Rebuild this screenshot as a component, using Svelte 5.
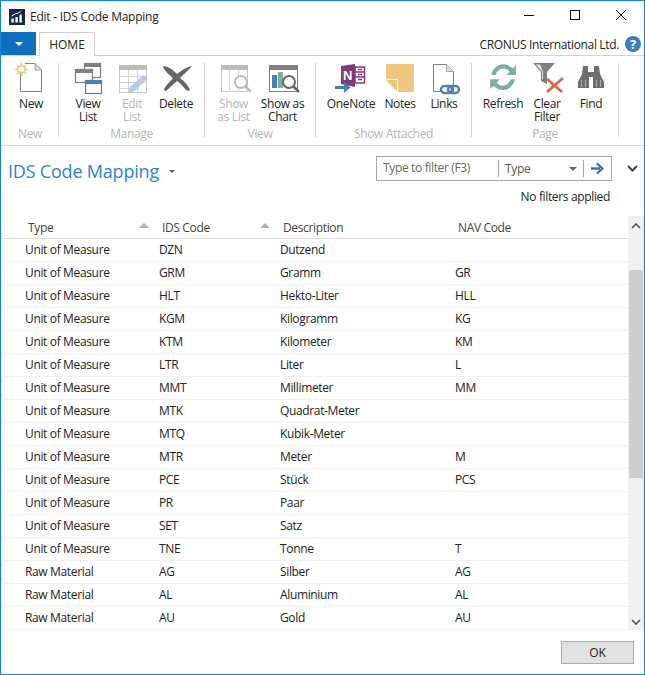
<script>
	const rows = [
		['Unit of Measure', 'DZN', 'Dutzend', ''],
		['Unit of Measure', 'GRM', 'Gramm', 'GR'],
		['Unit of Measure', 'HLT', 'Hekto-Liter', 'HLL'],
		['Unit of Measure', 'KGM', 'Kilogramm', 'KG'],
		['Unit of Measure', 'KTM', 'Kilometer', 'KM'],
		['Unit of Measure', 'LTR', 'Liter', 'L'],
		['Unit of Measure', 'MMT', 'Millimeter', 'MM'],
		['Unit of Measure', 'MTK', 'Quadrat-Meter', ''],
		['Unit of Measure', 'MTQ', 'Kubik-Meter', ''],
		['Unit of Measure', 'MTR', 'Meter', 'M'],
		['Unit of Measure', 'PCE', 'Stück', 'PCS'],
		['Unit of Measure', 'PR', 'Paar', ''],
		['Unit of Measure', 'SET', 'Satz', ''],
		['Unit of Measure', 'TNE', 'Tonne', 'T'],
		['Raw Material', 'AG', 'Silber', 'AG'],
		['Raw Material', 'AL', 'Aluminium', 'AL'],
		['Raw Material', 'AU', 'Gold', 'AU']
	];
</script>

{#snippet windowBox(x, y, w, h, head)}
	<rect x={x + 0.5} y={y + 0.5} width={w - 1} height={h - 1} fill="#fff" stroke={head} stroke-width="1.2" />
	<rect {x} {y} width={w} height="4" fill={head} />
{/snippet}

<div class="window">
	<header class="titlebar">
		<svg class="app-icon" width="20" height="20" viewBox="0 0 20 20">
			<rect width="20" height="20" fill="#12284c" />
			<path d="M3 17v-5h3v5zM8 17v-7h3v7zM13 17V7h3v10z" fill="#fff" />
			<path d="M3 9l5-3 4-1 3-3" fill="none" stroke="#fff" stroke-width="1.2" />
		</svg>
		<span class="title">Edit - IDS Code Mapping</span>
		<div class="window-controls">
			<svg width="14" height="14" viewBox="0 0 14 14"><path d="M2 7.5h10" stroke="#111" fill="none" /></svg>
			<svg width="14" height="14" viewBox="0 0 14 14"><rect x="2.5" y="2.5" width="9" height="9" stroke="#111" fill="none" /></svg>
			<svg width="14" height="14" viewBox="0 0 14 14"><path d="M2 2l10 10M12 2L2 12" stroke="#111" fill="none" /></svg>
		</div>
	</header>

	<div class="tabrow">
		<button class="app-menu" aria-label="Menu"><span class="menu-caret"></span></button>
		<div class="tab">HOME</div>
		<div class="company">CRONUS International Ltd.</div>
		<div class="help">?</div>
	</div>

	<div class="ribbon">
		<section class="group g1">
			<div class="buttons">
				<div class="rb w44">
					<svg width="32" height="32" viewBox="0 0 32 32">
						<path d="M5.500 10v18.500h21V7L20 .5h-10" fill="#fff" stroke="#7f7f7f" />
						<path d="M20 .5V7h6.500z" fill="#ddd" stroke="#aaa" />
						<path d="M6.500 0v13M0 6.500h13M2 2l9 9M11 2l-9 9" stroke="#f0c47a" stroke-width="1.500" />
						<circle cx="6.500" cy="6.500" r="3.500" fill="#fff" stroke="#f0c47a" stroke-width="1.500" />
					</svg>
					<span>New</span>
				</div>
			</div>
			<div class="group-name">New</div>
		</section>

		<section class="group g2">
			<div class="buttons">
				<div class="rb w44">
					<svg width="32" height="32" viewBox="0 0 32 32">
						{@render windowBox(12, 0, 17, 15, '#7f7f7f')}
						{@render windowBox(3, 6, 18, 14, '#7f7f7f')}
						{@render windowBox(13, 17, 17, 14, '#4a7fb5')}
					</svg>
					<span>View<br />List</span>
				</div>
				<div class="rb w44 off">
					<svg width="32" height="32" viewBox="0 0 32 32">
						<rect x="3.500" y="2.500" width="27" height="27" fill="#fff" stroke="#c8c8c8" />
						<rect x="3" y="2" width="28" height="5" fill="#bdbdbd" />
						<path d="M3 13.500h28M3 19.500h28M3 25.500h20M12.500 7v23M21.500 7v23" stroke="#d4d4d4" fill="none" />
						<path d="M12 30l2-6 13-12 5 3-13 13z" fill="#b3cbe3" />
					</svg>
					<span>Edit<br />List</span>
				</div>
				<div class="rb w44">
					<svg width="32" height="32" viewBox="0 0 32 32">
						<path d="M4 3c6 1 10 5 13 8 4-3 9-7 15-8-3 4-8 8-12 12 4 3 8 7 10 12-1 1-3 1-4 0-3-4-6-7-9-9-4 3-7 7-11 10-1 0-2-1-2-2 2-4 6-7 9-11C9 12 5 8 3 4z" fill="#666" />
					</svg>
					<span>Delete</span>
				</div>
			</div>
			<div class="group-name">Manage</div>
		</section>

		<section class="group g3">
			<div class="buttons">
				<div class="rb w49 off">
					<svg width="32" height="32" viewBox="0 0 32 32">
						<rect x="3.500" y="2.500" width="26" height="26" fill="#fff" stroke="#c8c8c8" />
						<rect x="3" y="2" width="27" height="5" fill="#bdbdbd" />
						<path d="M11.500 7v22M20.500 7v22" stroke="#d4d4d4" fill="none" />
						<circle cx="23" cy="19" r="6" fill="#fff" stroke="#bdbdbd" stroke-width="2" />
						<path d="M27.500 23.500l5 5" stroke="#bdbdbd" stroke-width="2.500" />
					</svg>
					<span>Show<br />as List</span>
				</div>
				<div class="rb w49">
					<svg width="32" height="32" viewBox="0 0 32 32">
						<rect x="2.500" y="2.500" width="28" height="26" fill="#fff" stroke="#7f7f7f" />
						<rect x="2" y="2" width="29" height="5" fill="#7f7f7f" />
						<rect x="5" y="12" width="5" height="13" fill="#4a7fb5" />
						<rect x="11" y="9" width="5" height="16" fill="#7fae9b" />
						<circle cx="22" cy="19" r="6" fill="#fff" stroke="#666" stroke-width="2" />
						<path d="M26.500 23.500l5.500 5.500" stroke="#666" stroke-width="2.500" />
					</svg>
					<span>Show as<br />Chart</span>
				</div>
			</div>
			<div class="group-name">View</div>
		</section>

		<section class="group g4">
			<div class="buttons">
				<div class="rb w60">
					<svg width="32" height="32" viewBox="0 0 32 32">
						<path d="M6 3l14-2v23l-14-3z" fill="#80397b" />
						<rect x="20" y="4" width="9.500" height="16" fill="#fff" stroke="#80397b" stroke-width="1.500" />
						<path d="M20 9h9M20 14h9" stroke="#80397b" stroke-width="1.500" />
						<path d="M23 6.500h4M23 11.500h4M23 16.500h4" stroke="#80397b" stroke-width="1.500" />
						<text class="onenote-n" x="8" y="17">N</text>
						<path d="M0 24.500h11" stroke="#4a7fb5" stroke-width="3" />
						<path d="M9 19l6.500 5.500L9 30z" fill="#4a7fb5" />
					</svg>
					<span>OneNote</span>
				</div>
				<div class="rb w38">
					<svg width="32" height="32" viewBox="0 0 32 32">
						<path d="M2 1h28v28H13L2 17z" fill="#eec77f" />
						<path d="M2 16.500h11.500V29" fill="none" stroke="#fff" stroke-width="1.200" />
					</svg>
					<span>Notes</span>
				</div>
				<div class="rb w50">
					<svg width="32" height="32" viewBox="0 0 32 32">
						<path d="M5.500 1.500h13l7 7v20h-20z" fill="#fff" stroke="#7f7f7f" />
						<path d="M18.500 1.500v7h7" fill="#ddd" stroke="#aaa" />
						<rect x="13" y="23" width="11" height="7" rx="3.500" fill="#fff" stroke="#4a7fb5" stroke-width="2.400" />
						<rect x="20" y="23" width="11" height="7" rx="3.500" fill="none" stroke="#4a7fb5" stroke-width="2.400" />
					</svg>
					<span>Links</span>
				</div>
			</div>
			<div class="group-name">Show Attached</div>
		</section>

		<section class="group g5">
			<div class="buttons">
				<div class="rb w44">
					<svg width="32" height="32" viewBox="0 0 32 32">
						<g transform="translate(1 -1) scale(1.080)">
							<path d="M3 12C4 6 9 2 14 2c4 0 7 2 9 4l3-3v9h-9l3-3c-1.500-2-4-3-6-3-3 0-6 3-7 6z" fill="#7fae9b" />
							<path d="M25 16c-1 6-6 10-11 10-4 0-7-2-9-4l-3 3v-9h9l-3 3c1.500 2 4 3 6 3 3 0 6-3 7-6z" fill="#7fae9b" />
						</g>
					</svg>
					<span>Refresh</span>
				</div>
				<div class="rb w44">
					<svg width="32" height="32" viewBox="0 0 32 32">
						<path d="M2 0h22l-8 9v12l-6-3V9z" fill="#7f7f7f" />
						<path d="M5 1.500h4l3 7v8l-1 -.5V8.500z" fill="#e4e4e4" />
						<path d="M16 16l15 13M32 15L16 29" stroke="#d4694a" stroke-width="2.800" fill="none" />
					</svg>
					<span>Clear<br />Filter</span>
				</div>
				<div class="rb w44">
					<svg width="32" height="32" viewBox="0 0 32 32">
						<path d="M8 3h5v6h6V3h5l1 8 4 8v6H18V14h-4v11H3v-6l4-8z" fill="#6e6e6e" />
						<path d="M6.500 24v-7M10.500 24v-7M21.500 24v-7M25.500 24v-7" stroke="#aaa" fill="none" />
					</svg>
					<span>Find</span>
				</div>
			</div>
			<div class="group-name">Page</div>
		</section>
	</div>

	<div class="page-head">
		<div class="page-title">
			<h1>IDS Code Mapping</h1>
			<span class="title-caret"></span>
		</div>
		<div class="filter-side">
			<div class="filter-line">
				<div class="filter">
					<span class="filter-input">Type to filter (F3)</span>
					<span class="filter-field">Type</span>
					<span class="field-caret"></span>
					<svg class="filter-go" width="13" height="11" viewBox="0 0 13 11">
						<path d="M0 5.500h9" stroke="#2d6fb0" stroke-width="2.400" />
						<path d="M6 0.500l5.500 5-5.500 5" fill="none" stroke="#2d6fb0" stroke-width="2.200" />
					</svg>
				</div>
				<svg class="collapse" width="11" height="7" viewBox="0 0 11 7">
					<path d="M1 1l4.500 4.500L10 1" fill="none" stroke="#444" stroke-width="2" />
				</svg>
			</div>
			<div class="no-filters">No filters applied</div>
		</div>
	</div>

	<div class="list">
		<div class="table">
			<div class="row head">
				<div class="cell sorted">Type<i></i></div>
				<div class="cell sorted">IDS Code<i></i></div>
				<div class="cell">Description</div>
				<div class="cell">NAV Code</div>
			</div>
			{#each rows as r}
				<div class="row">
					{#each r as v}
						<div class="cell">{v}</div>
					{/each}
				</div>
			{/each}
		</div>
		<div class="scrollbar">
			<svg width="10" height="6" viewBox="0 0 10 6"><path d="M1 5l4-4 4 4" fill="none" stroke="#555" stroke-width="1.600" /></svg>
			<div class="track"><div class="thumb"></div></div>
			<svg width="10" height="6" viewBox="0 0 10 6"><path d="M1 1l4 4 4-4" fill="none" stroke="#555" stroke-width="1.600" /></svg>
		</div>
	</div>

	<footer class="footer">
		<button class="ok">OK</button>
	</footer>
</div>

<style>
	:global(body) {
		margin: 0;
		background: #fff;
	}

	.window {
		box-sizing: border-box;
		width: 645px;
		height: 675px;
		border: 1px solid #1883d7;
		padding-left: 1px;
		display: flex;
		flex-direction: column;
		font-family: 'Open Sans', sans-serif;
		font-size: 12px;
		letter-spacing: -0.35px;
		color: #222;
		background: #fff;
		overflow: hidden;
	}

	.titlebar {
		height: 31px;
		display: flex;
		align-items: center;
		padding-left: 7px;
		flex: none;
	}

	.app-icon {
		margin-right: 5px;
		margin-top: 1px;
		width: 16px;
		height: 16px;
	}

	.title {
		color: #222;
		letter-spacing: -0.25px;
	}

	.window-controls {
		margin-left: auto;
		display: flex;
		gap: 32px;
		padding-right: 16px;
		margin-top: -3px;
	}

	.window-controls svg {
		display: block;
	}

	.tabrow {
		height: 24px;
		flex: none;
		display: flex;
		align-items: stretch;
		box-sizing: border-box;
		border-bottom: 1px solid #d2d2d2;
		margin-left: -1px;
	}

	.app-menu {
		width: 35px;
		height: 23px;
		border: 0;
		padding: 0;
		background: #106ebe;
		display: flex;
		align-items: center;
		justify-content: center;
		margin-right: 3px;
	}

	.menu-caret {
		width: 0;
		height: 0;
		border-left: 4px solid transparent;
		border-right: 4px solid transparent;
		border-top: 4px solid #fff;
	}

	.tab {
		box-sizing: border-box;
		width: 56px;
		height: 24px;
		border: 1px solid #d2d2d2;
		border-bottom: 0;
		background: #fff;
		text-align: center;
		line-height: 24px;
		letter-spacing: 0;
		color: #222;
	}

	.company {
		margin-left: auto;
		line-height: 26px;
		margin-right: 6px;
	}

	.help {
		width: 16px;
		height: 16px;
		border-radius: 50%;
		background: #3f7cbf;
		color: #fff;
		font-weight: 700;
		font-size: 13px;
		line-height: 16px;
		text-align: center;
		margin: 4px 3px 0 0;
	}

	.ribbon {
		height: 90px;
		flex: none;
		box-sizing: border-box;
		border-bottom: 1px solid #d2d2d2;
		display: flex;
		padding-top: 7px;
		margin-left: -1px;
		padding-left: 1px;
	}

	.group {
		box-sizing: border-box;
		height: 74px;
		border-right: 1px solid #d2d2d2;
		display: flex;
		flex-direction: column;
		flex: none;
	}

	.g1 { width: 57px; padding-left: 7px; }
	.g2 { width: 146px; padding-left: 7px; }
	.g3 { width: 111px; padding-left: 4px; }
	.g4 { width: 156px; padding-left: 5px; }
	.g5 { width: 147px; padding-left: 9px; }

	.buttons {
		display: flex;
		height: 64px;
		flex: none;
	}

	.rb {
		display: flex;
		flex-direction: column;
		align-items: center;
		text-align: center;
		line-height: 13px;
		color: #222;
	}

	.rb svg {
		height: 32px;
		margin-bottom: 2px;
		flex: none;
		overflow: visible;
	}

	.rb.off {
		color: #b4b4b4;
	}

	.w38 { width: 38px; }
	.w44 { width: 44px; }
	.w49 { width: 49px; }
	.w50 { width: 50px; }
	.w60 { width: 60px; }

	.onenote-n {
		font-family: 'Liberation Sans', sans-serif;
		font-weight: 700;
		font-size: 13px;
		fill: #fff;
	}

	.group-name {
		flex: none;
		text-align: center;
		color: #b4b4b4;
		margin-left: -7px;
		line-height: 14px;
	}

	.g3 .group-name { margin-left: -4px; }
	.g4 .group-name { margin-left: -5px; }
	.g5 .group-name { margin-left: -9px; }

	.page-head {
		height: 70px;
		flex: none;
		display: flex;
		justify-content: space-between;
		box-sizing: border-box;
		padding-top: 10px;
	}

	.page-title {
		display: flex;
		align-items: flex-start;
		padding-left: 6px;
		padding-top: 3px;
	}

	h1 {
		margin: 0;
		font-size: 18px;
		font-weight: 400;
		letter-spacing: -0.2px;
		line-height: 24px;
		color: #2b83d6;
	}

	.title-caret {
		margin: 11px 0 0 10px;
		width: 0;
		height: 0;
		border-left: 3px solid transparent;
		border-right: 3px solid transparent;
		border-top: 3px solid #555;
	}

	.filter-side {
		display: flex;
		flex-direction: column;
		align-items: flex-end;
	}

	.filter-line {
		display: flex;
		align-items: center;
	}

	.filter {
		box-sizing: border-box;
		width: 236px;
		height: 25px;
		border: 1px solid #a6a6a6;
		display: flex;
		align-items: center;
	}

	.filter-input {
		width: 122px;
		padding-left: 6px;
		box-sizing: border-box;
		height: 17px;
		line-height: 15px;
		border-right: 1px solid #a6a6a6;
		color: #666;
	}

	.filter-field {
		padding-left: 6px;
		width: 70px;
		box-sizing: border-box;
		color: #555;
	}

	.field-caret {
		width: 0;
		height: 0;
		border-left: 4px solid transparent;
		border-right: 4px solid transparent;
		border-top: 4px solid #666;
		margin-right: 6px;
	}

	.filter-go {
		border-left: 1px solid #a6a6a6;
		padding: 3px 7px;
		box-sizing: content-box;
	}

	.collapse {
		margin: 0 6px 0 15px;
	}

	.no-filters {
		margin: 8px 34px 0 0;
		line-height: 16px;
		color: #222;
	}

	.list {
		flex: none;
		height: 414px;
		display: flex;
	}

	.table {
		width: 626px;
		flex: none;
	}

	.row {
		display: grid;
		grid-template-columns: 134px 121px 175px 1fr;
		height: 23px;
		box-sizing: border-box;
		padding-left: 23px;
		border-bottom: 1px solid #efefef;
		line-height: 22px;
	}

	.row.head {
		padding-left: 26px;
		border-bottom: 1px solid #d8d8d8;
		line-height: 24px;
		color: #444;
	}

	.cell {
		position: relative;
		white-space: nowrap;
	}

	.sorted i {
		position: absolute;
		right: 13px;
		top: 7px;
		width: 0;
		height: 0;
		border-left: 5px solid transparent;
		border-right: 5px solid transparent;
		border-bottom: 5px solid #b0b0b0;
	}

	.scrollbar {
		width: 16px;
		background: #f0f0f0;
		display: flex;
		flex-direction: column;
		align-items: center;
		padding: 7px 0 5px;
		box-sizing: border-box;
	}

	.track {
		flex: 1;
		width: 100%;
		padding-top: 41px;
	}

	.thumb {
		width: 14px;
		margin: 0 auto;
		height: 208px;
		background: #cdcdcd;
	}

	.footer {
		flex: 1;
		display: flex;
		justify-content: flex-end;
		align-items: flex-start;
		padding: 11px 10px 0 0;
	}

	.ok {
		box-sizing: border-box;
		width: 73px;
		height: 23px;
		border: 1px solid #adadad;
		background: #e1e1e1;
		font-family: 'Open Sans', sans-serif;
		font-size: 12px;
		color: #222;
		padding: 0;
	}
</style>
